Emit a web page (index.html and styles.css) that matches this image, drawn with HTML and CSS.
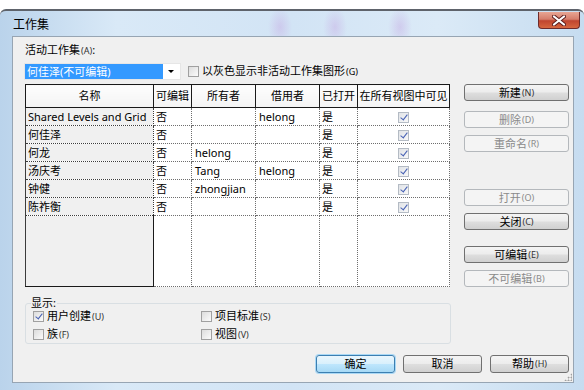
FILE: index.html
```html
<!DOCTYPE html>
<html lang="zh-CN">
<head>
    <meta charset="UTF-8">
    <meta name="viewport" content="width=device-width, initial-scale=1.0">
    <title>工作集</title>
    <link rel="stylesheet" href="styles.css">
</head>
<body>
    <div class="window">
        <div class="titlebar">
            <span class="title">工作集</span>
            <div class="close">
                <svg width="14" height="11" viewBox="0 0 14 11">
                    <path d="M2 1.5 L12 9.5 M12 1.5 L2 9.5" stroke="#5a1c1c" stroke-width="4" stroke-linecap="round"/>
                    <path d="M2 1.5 L12 9.5 M12 1.5 L2 9.5" stroke="#fff" stroke-width="2.2" stroke-linecap="round"/>
                </svg>
            </div>
        </div>
        <div class="client">
            <div class="label">活动工作集<span class="key">(A)</span>:</div>
            <div class="active-row">
                <div class="combo">
                    <span class="combo-value">何佳泽(不可编辑)</span>
                    <span class="combo-arrow"></span>
                </div>
                <div class="check disabled">
                    <span class="box"></span>
                    <span>以灰色显示非活动工作集图形<span class="key">(G)</span></span>
                </div>
            </div>
            <div class="main">
                <table class="grid">
                    <colgroup>
                        <col class="c-name"><col class="c-edit"><col class="c-owner">
                        <col class="c-borrow"><col class="c-open"><col class="c-vis">
                    </colgroup>
                    <thead>
                        <tr><th>名称</th><th>可编辑</th><th>所有者</th><th>借用者</th><th>已打开</th><th>在所有视图中可见</th></tr>
                    </thead>
                    <tbody>
                        <tr><th>Shared Levels and Grid</th><td>否</td><td></td><td>helong</td><td>是</td><td class="vis"><span class="cell-check"></span></td></tr>
                        <tr><th>何佳泽</th><td>否</td><td></td><td></td><td>是</td><td class="vis"><span class="cell-check"></span></td></tr>
                        <tr><th>何龙</th><td>否</td><td>helong</td><td></td><td>是</td><td class="vis"><span class="cell-check"></span></td></tr>
                        <tr><th>汤庆考</th><td>否</td><td>Tang</td><td>helong</td><td>是</td><td class="vis"><span class="cell-check"></span></td></tr>
                        <tr><th>钟健</th><td>否</td><td>zhongjian</td><td></td><td>是</td><td class="vis"><span class="cell-check"></span></td></tr>
                        <tr><th>陈祚衡</th><td>否</td><td></td><td></td><td>是</td><td class="vis"><span class="cell-check"></span></td></tr>
                        <tr class="filler"><th></th><td></td><td></td><td></td><td></td><td></td></tr>
                    </tbody>
                </table>
                <div class="side-buttons">
                    <div class="btn">新建<span class="key">(N)</span></div>
                    <div class="btn disabled gap-10">删除<span class="key">(D)</span></div>
                    <div class="btn disabled gap-8">重命名<span class="key">(R)</span></div>
                    <div class="btn disabled gap-37">打开<span class="key">(O)</span></div>
                    <div class="btn gap-8">关闭<span class="key">(C)</span></div>
                    <div class="btn gap-16">可编辑<span class="key">(E)</span></div>
                    <div class="btn disabled gap-8">不可编辑<span class="key">(B)</span></div>
                </div>
            </div>
            <fieldset class="show">
                <legend>显示:</legend>
                <div class="check"><span class="box checked"></span><span>用户创建<span class="key">(U)</span></span></div>
                <div class="check"><span class="box"></span><span>项目标准<span class="key">(S)</span></span></div>
                <div class="check"><span class="box"></span><span>族<span class="key">(F)</span></span></div>
                <div class="check"><span class="box"></span><span>视图<span class="key">(V)</span></span></div>
            </fieldset>
            <div class="footer">
                <div class="btn default">确定</div>
                <div class="btn">取消</div>
                <div class="btn">帮助<span class="key">(H)</span></div>
            </div>
            <div class="grip"></div>
        </div>
    </div>
</body>
</html>
```

FILE: styles.css
```css
* {
    box-sizing: border-box;
}
body {
    margin: 0;
    background: #fff;
    font-family: "Noto Sans", "Noto Sans CJK SC", sans-serif;
    font-size: 11px;
    line-height: 14px;
    color: #000;
    overflow: hidden;
}
.key {
    font-size: 9px;
    margin-left: 1px;
    color: #333;
}
.disabled .key {
    color: inherit;
}
.window {
    margin-top: 9px;
    height: 381px;
    border-top: 2px solid #5e636b;
    border-radius: 6px 6px 0 0;
    padding: 0 10px 0 12px;
    background:
        radial-gradient(ellipse 12px 20px at 280px 16px, rgba(200, 180, 230, 0.55), transparent),
        radial-gradient(ellipse 12px 20px at 335px 16px, rgba(200, 180, 230, 0.55), transparent),
        radial-gradient(ellipse 12px 20px at 400px 16px, rgba(200, 180, 230, 0.55), transparent),
        linear-gradient(90deg, #bad3eb 0%, #d9e9f7 20%, #d2e4f5 50%, #dbeaf7 75%, #c6dcf0 100%);
    display: flex;
    flex-direction: column;
}
.titlebar {
    height: 25px;
    margin-right: -6px;
    display: flex;
    justify-content: space-between;
    align-items: flex-start;
}
.title {
    padding: 7px 0 0 1px;
    font-size: 12px;
}
.close {
    margin-top: 1px;
    width: 42px;
    height: 17px;
    border: 1px solid #6d2b2b;
    border-top: none;
    border-radius: 0 0 4px 4px;
    background: linear-gradient(#e8a593 0%, #d57e6c 45%, #c0452f 55%, #d6663f 100%);
    display: flex;
    justify-content: center;
    align-items: center;
}
.client {
    position: relative;
    height: 347px;
    border: 1px solid #97a5b3;
    background: #f0f0f0;
    padding: 6px 4px 0 12px;
}
.label {
    height: 14px;
}
.active-row {
    margin-top: 6px;
    display: flex;
    align-items: center;
    height: 17px;
}
.combo {
    margin-left: -1px;
    width: 157px;
    height: 17px;
    background: #fff;
    border: 1px solid #e6e6e6;
    display: flex;
    align-items: stretch;
}
.combo-value {
    flex: 1;
    background: #3399ff;
    color: #fff;
    padding-left: 2px;
    line-height: 15px;
}
.combo-arrow {
    width: 17px;
    position: relative;
}
.combo-arrow::after {
    content: "";
    position: absolute;
    left: 5px;
    top: 6px;
    border-left: 3px solid transparent;
    border-right: 3px solid transparent;
    border-top: 3px solid #000;
}
.active-row .check {
    margin-left: 7px;
}
.check {
    display: flex;
    align-items: center;
    gap: 3px;
    height: 14px;
}
.box {
    width: 11px;
    height: 11px;
    border: 1px solid #a0a0a0;
    background: linear-gradient(135deg, #dcdcdc, #fbfbfb);
    position: relative;
}
.box.checked::after,
.cell-check::after {
    content: "";
    position: absolute;
    left: 3px;
    top: 0;
    width: 3px;
    height: 6px;
    border-right: 1.5px solid #4660b4;
    border-bottom: 1.5px solid #4660b4;
    transform: rotate(38deg);
}
.main {
    margin-top: 4px;
    display: flex;
    align-items: flex-start;
    gap: 14px;
}
.grid {
    border-collapse: collapse;
    table-layout: fixed;
    width: 425px;
    background: #fff;
}
.c-name { width: 128px; }
.c-edit { width: 38px; }
.c-owner { width: 64px; }
.c-borrow { width: 64px; }
.c-open { width: 38px; }
.c-vis { width: 92px; }
.grid thead th {
    height: 23px;
    border: 1px solid #1a1a1a;
    background: linear-gradient(#fdfdfd, #f4f4f4);
    font-weight: normal;
    text-align: center;
    padding: 0;
    white-space: nowrap;
    overflow: hidden;
}
.grid tbody th,
.grid tbody td {
    height: 18px;
    padding: 0 0 0 2px;
    border: 1px dotted #6e6e6e;
    font-weight: normal;
    text-align: left;
    white-space: nowrap;
    overflow: hidden;
}
.grid tbody th {
    background: #f0f0f0;
    border-left: 1px solid #1a1a1a;
    border-color: #3c3c3c;
}
.grid tbody td:nth-child(3),
.grid tbody td:nth-child(4) {
    padding-left: 3px;
}
.grid td.vis {
    text-align: center;
    padding: 0;
}
.cell-check {
    display: inline-block;
    vertical-align: middle;
    width: 11px;
    height: 11px;
    border: 1px solid #b4bbc4;
    background: linear-gradient(135deg, #e0e3e7, #f8f8f8);
    position: relative;
}
.grid tr.filler th,
.grid tr.filler td {
    height: 71px;
}
.grid tr.filler th {
    border-right: 1px solid #1a1a1a;
    border-bottom: 1px solid #1a1a1a;
    border-top-style: dotted;
}
.side-buttons {
    display: flex;
    flex-direction: column;
    width: 105px;
}
.btn {
    height: 17px;
    border: 1px solid #707070;
    border-radius: 3px;
    background: linear-gradient(#f4f4f4 0%, #ececec 48%, #dedede 52%, #d0d0d0 100%);
    display: flex;
    justify-content: center;
    align-items: center;
    white-space: nowrap;
}
.btn.disabled {
    border-color: #b4b8bc;
    background: #f4f4f4;
    color: #8a8a8a;
}
.gap-8 { margin-top: 7px; }
.gap-10 { margin-top: 10px; }
.gap-16 { margin-top: 16px; }
.gap-37 { margin-top: 37px; }
.show {
    margin: 10px 0 0 0;
    width: 426px;
    height: 47px;
    border: 1px solid #d9dfe3;
    border-radius: 3px;
    padding: 0 7px 0 7px;
    display: grid;
    grid-template-columns: 168px auto;
    align-content: start;
    row-gap: 4px;
}
.show legend {
    padding: 0 1px 0 0;
    margin-left: -2px;
    line-height: 12px;
}
.footer {
    margin-top: 11px;
    display: flex;
    justify-content: flex-end;
    gap: 8px;
}
.footer .btn {
    width: 79px;
    height: 18px;
}
.btn.default {
    border-color: #3c7fb1;
    box-shadow: 0 0 0 1px #a9d8f5;
    background: linear-gradient(#eaf6fd 0%, #d9f0fc 48%, #bee6fd 52%, #a7d9f5 100%);
}
.grip {
    position: absolute;
    right: 1px;
    bottom: 1px;
    width: 8px;
    height: 8px;
    background: radial-gradient(circle, #a0a0a0 0.8px, transparent 1.2px) 0 0 / 3px 3px;
    clip-path: polygon(100% 0, 100% 100%, 0 100%);
}
```
